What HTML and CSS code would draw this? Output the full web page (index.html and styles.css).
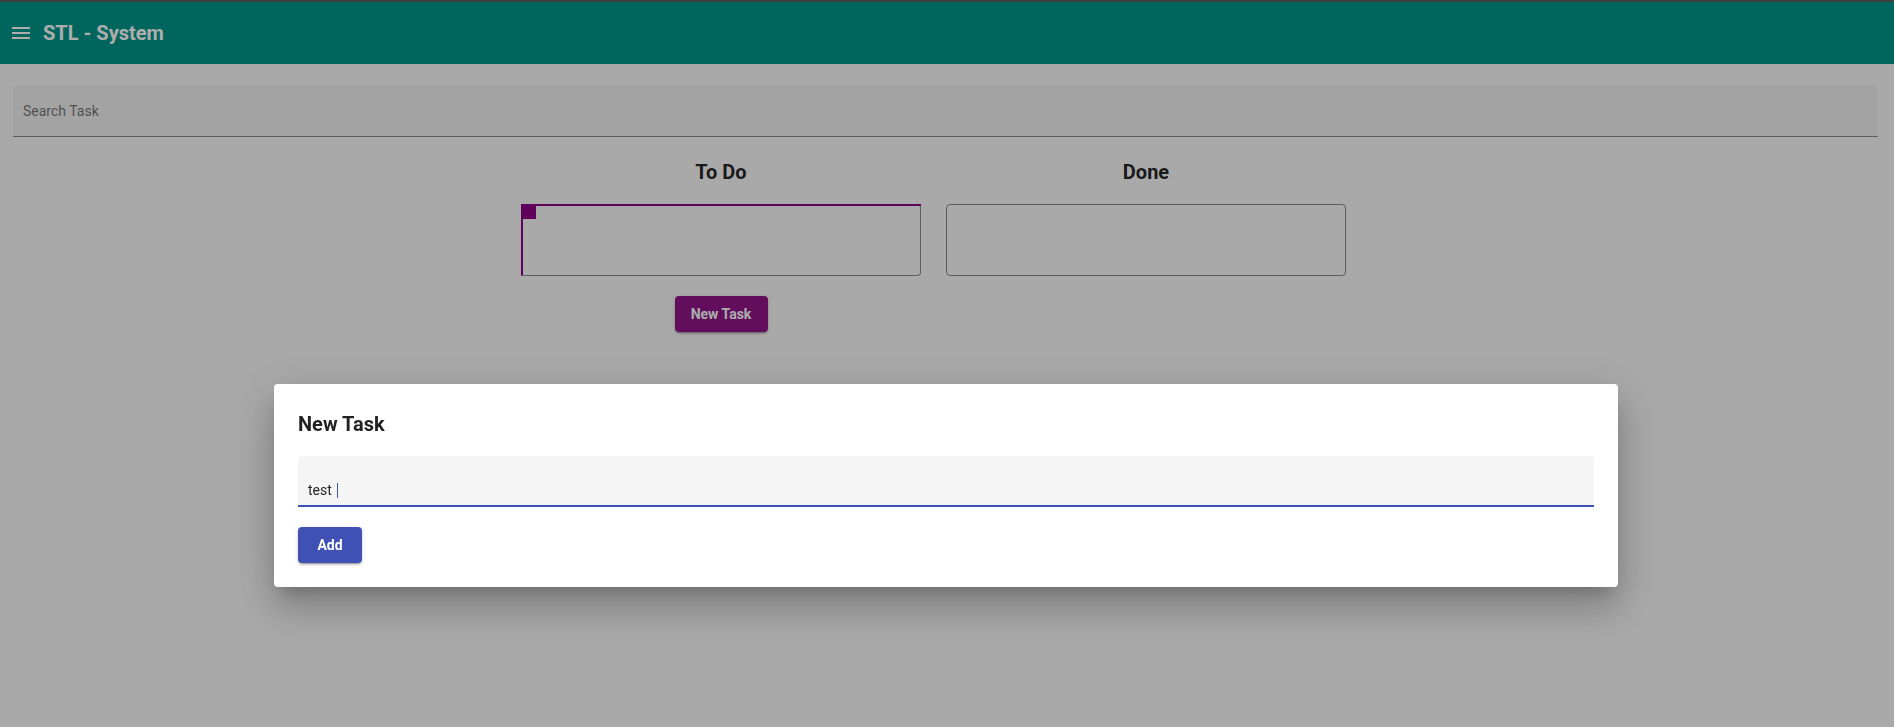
FILE: index.html
```html
<!DOCTYPE html>
<html lang="en">
<head>
<meta charset="utf-8">
<title>STL - System</title>
<link rel="stylesheet" href="styles.css">
</head>
<body>
<header class="toolbar">
  <span class="menu-icon">
    <svg width="24" height="24" viewBox="0 0 24 24"><path fill="currentColor" d="M3 18h18v-2H3v2zm0-5h18v-2H3v2zm0-7v2h18V6H3z"/></svg>
  </span>
  <span class="app-title">STL - System</span>
</header>

<main class="page">
  <div class="search-field">
    <span class="search-label">Search Task</span>
  </div>

  <section class="board">
    <div class="column">
      <h2 class="column-title">To Do</h2>
      <div class="drop-list focused"></div>
      <button class="btn btn-purple">New Task</button>
    </div>
    <div class="column">
      <h2 class="column-title">Done</h2>
      <div class="drop-list"></div>
    </div>
  </section>
</main>

<div class="backdrop">
  <div class="dialog">
    <h2 class="dialog-title">New Task</h2>
    <div class="dialog-field">
      <span class="field-value">test</span><span class="caret"></span>
    </div>
    <button class="btn btn-indigo">Add</button>
  </div>
</div>
</body>
</html>
```

FILE: styles.css
```css
* { box-sizing: border-box; }

html, body {
  margin: 0;
  height: 100%;
}

body {
  background: #fafafa;
  font-family: Roboto, "Noto Sans", "Liberation Sans", sans-serif;
  font-size: 14px;
  color: rgba(0,0,0,.87);
  overflow: hidden;
}

.toolbar {
  height: 64px;
  border-top: 2px solid #5e5e5e;
  background: #009688;
  color: #fff;
  display: flex;
  align-items: center;
  padding-left: 9px;
  gap: 10px;
}

.menu-icon {
  width: 24px;
  height: 24px;
  display: flex;
}

.app-title {
  font-size: 20px;
  font-weight: 700;
  line-height: 32px;
}

.page {
  padding: 21px 16px 0 13px;
}

.search-field {
  background: rgba(0,0,0,.04);
  border-radius: 4px 4px 0 0;
  border-bottom: 1px solid rgba(0,0,0,.42);
  padding: 18px 10px 17px 10px;
  line-height: 16px;
}

.search-label {
  color: rgba(0,0,0,.54);
  font-size: 14px;
}

.board {
  display: flex;
  justify-content: center;
  gap: 25px;
  margin-left: -13px;
  margin-right: 11px;
}

.column {
  width: 400px;
  display: flex;
  flex-direction: column;
  align-items: center;
}

.column-title {
  margin: 19px 0 16px;
  font-size: 20px;
  font-weight: 700;
  line-height: 32px;
  color: rgba(0,0,0,.87);
}

.drop-list {
  position: relative;
  width: 400px;
  height: 72px;
  border: 1px solid #8a8a8a;
  border-radius: 4px;
}

.drop-list.focused {
  border-left: 2px solid #8c0085;
  border-top-left-radius: 0;
  border-bottom-left-radius: 0;
}

.drop-list.focused::before {
  content: "";
  position: absolute;
  top: -1px;
  left: -2px;
  right: -1px;
  height: 2px;
  background: #8c0085;
}

.drop-list.focused::after {
  content: "";
  position: absolute;
  top: -1px;
  left: -2px;
  width: 15px;
  height: 15px;
  background: #8c0085;
}

.btn {
  border: none;
  border-radius: 4px;
  height: 36px;
  padding: 0;
  font-family: Roboto, "Noto Sans", "Liberation Sans", sans-serif;
  font-size: 14px;
  font-weight: 700;
  color: #fff;
  line-height: 36px;
  text-align: center;
  cursor: pointer;
}

.btn-purple {
  margin-top: 20px;
  width: 93px;
  background: #911689;
  box-shadow: 0 3px 1px -2px rgba(0,0,0,.2), 0 2px 2px 0 rgba(0,0,0,.14), 0 1px 5px 0 rgba(0,0,0,.12);
}

.backdrop {
  position: fixed;
  inset: 0;
  background: rgba(0,0,0,.32);
  display: flex;
  justify-content: flex-start;
  align-items: flex-start;
  padding: 384px 0 0 274px;
}

.dialog {
  width: 1344px;
  background: #fff;
  border-radius: 4px;
  padding: 24px;
  box-shadow: 0 11px 15px -7px rgba(0,0,0,.2), 0 24px 38px 3px rgba(0,0,0,.14), 0 9px 46px 8px rgba(0,0,0,.12);
}

.dialog-title {
  margin: 0 0 16px;
  font-size: 20px;
  font-weight: 700;
  line-height: 32px;
  color: rgba(0,0,0,.87);
}

.dialog-field {
  background: #f5f5f5;
  border-radius: 4px 4px 0 0;
  border-bottom: 2px solid #3f51b5;
  padding: 26px 10px 7px;
  line-height: 16px;
  display: flex;
  align-items: center;
}

.field-value {
  font-size: 14px;
  color: rgba(0,0,0,.87);
}

.caret {
  display: inline-block;
  width: 1px;
  height: 15px;
  background: #3f51b5;
  margin-left: 5px;
}

.btn-indigo {
  margin-top: 20px;
  width: 64px;
  background: #3f51b5;
  display: block;
  box-shadow: 0 3px 1px -2px rgba(0,0,0,.2), 0 2px 2px 0 rgba(0,0,0,.14), 0 1px 5px 0 rgba(0,0,0,.12);
}
```
